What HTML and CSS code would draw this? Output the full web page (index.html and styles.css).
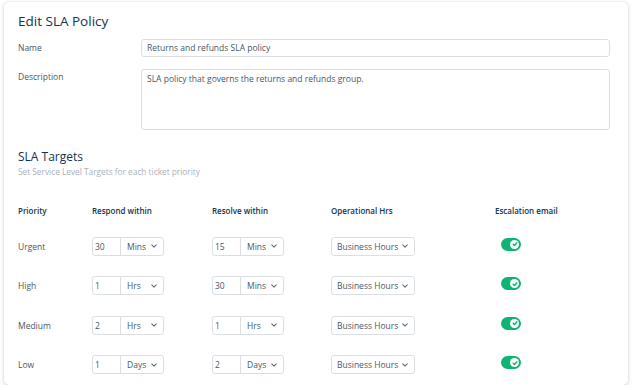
FILE: index.html
```html
<!DOCTYPE html>
<html>
<head>
<meta charset="utf-8">
<link rel="stylesheet" href="styles.css">
</head>
<body>
<div class="card">
  <h1 class="title">Edit SLA Policy</h1>
  <div class="form">
    <div class="form-row">
      <label class="form-label label-name">Name</label>
      <div class="input">Returns and refunds SLA policy</div>
    </div>
    <div class="form-row">
      <label class="form-label">Description</label>
      <div class="input textarea">SLA policy that governs the returns and refunds group.</div>
    </div>
  </div>
  <h2 class="section-title">SLA Targets</h2>
  <p class="section-sub">Set Service Level Targets for each ticket priority</p>
  <div class="table">
    <div class="th">Priority</div>
    <div class="th">Respond within</div>
    <div class="th">Resolve within</div>
    <div class="th">Operational Hrs</div>
    <div class="th">Escalation email</div>

    <div class="td pr">Urgent</div>
    <div class="td"><div class="combo"><span class="num">30</span><span class="unit">Mins<svg class="chev" viewBox="0 0 8 5"><path d="M1 1l3 3 3-3"/></svg></span></div></div>
    <div class="td"><div class="combo"><span class="num">15</span><span class="unit">Mins<svg class="chev" viewBox="0 0 8 5"><path d="M1 1l3 3 3-3"/></svg></span></div></div>
    <div class="td"><div class="select"><span class="sel-text">Business Hours</span><svg class="chev" viewBox="0 0 8 5"><path d="M1 1l3 3 3-3"/></svg></div></div>
    <div class="td tg"><span class="toggle"><span class="knob"><svg viewBox="0 0 8 8"><path d="M2.2 4.2l1.3 1.3 2.4-2.7"/></svg></span></span></div>

    <div class="td pr">High</div>
    <div class="td"><div class="combo"><span class="num">1</span><span class="unit">Hrs<svg class="chev" viewBox="0 0 8 5"><path d="M1 1l3 3 3-3"/></svg></span></div></div>
    <div class="td"><div class="combo"><span class="num">30</span><span class="unit">Mins<svg class="chev" viewBox="0 0 8 5"><path d="M1 1l3 3 3-3"/></svg></span></div></div>
    <div class="td"><div class="select"><span class="sel-text">Business Hours</span><svg class="chev" viewBox="0 0 8 5"><path d="M1 1l3 3 3-3"/></svg></div></div>
    <div class="td tg"><span class="toggle"><span class="knob"><svg viewBox="0 0 8 8"><path d="M2.2 4.2l1.3 1.3 2.4-2.7"/></svg></span></span></div>

    <div class="td pr">Medium</div>
    <div class="td"><div class="combo"><span class="num">2</span><span class="unit">Hrs<svg class="chev" viewBox="0 0 8 5"><path d="M1 1l3 3 3-3"/></svg></span></div></div>
    <div class="td"><div class="combo"><span class="num">1</span><span class="unit">Hrs<svg class="chev" viewBox="0 0 8 5"><path d="M1 1l3 3 3-3"/></svg></span></div></div>
    <div class="td"><div class="select"><span class="sel-text">Business Hours</span><svg class="chev" viewBox="0 0 8 5"><path d="M1 1l3 3 3-3"/></svg></div></div>
    <div class="td tg"><span class="toggle"><span class="knob"><svg viewBox="0 0 8 8"><path d="M2.2 4.2l1.3 1.3 2.4-2.7"/></svg></span></span></div>

    <div class="td pr">Low</div>
    <div class="td"><div class="combo"><span class="num">1</span><span class="unit">Days<svg class="chev" viewBox="0 0 8 5"><path d="M1 1l3 3 3-3"/></svg></span></div></div>
    <div class="td"><div class="combo"><span class="num">2</span><span class="unit">Days<svg class="chev" viewBox="0 0 8 5"><path d="M1 1l3 3 3-3"/></svg></span></div></div>
    <div class="td"><div class="select"><span class="sel-text">Business Hours</span><svg class="chev" viewBox="0 0 8 5"><path d="M1 1l3 3 3-3"/></svg></div></div>
    <div class="td tg"><span class="toggle"><span class="knob"><svg viewBox="0 0 8 8"><path d="M2.2 4.2l1.3 1.3 2.4-2.7"/></svg></span></span></div>
  </div>
</div>
</body>
</html>
```

FILE: styles.css
```css
* { box-sizing: border-box; }
html, body { margin: 0; padding: 0; background: #ffffff; }
body {
  font-family: "Open Sans", "Liberation Sans", sans-serif;
  color: #475867;
  padding: 2px 5px 0 4px;
}
.card {
  width: 624px;
  height: 383px;
  background: #fff;
  border-radius: 5px;
  box-shadow: 0 1px 4px rgba(0,0,0,0.18), 0 0 1px rgba(0,0,0,0.12);
  padding: 10px 18px 0 14px;
}
.title {
  margin: 0;
  font-size: 13.5px;
  line-height: 18px;
  font-weight: 400;
  color: #12344d;
}
.form { margin-top: 9px; display: flex; flex-direction: column; gap: 12px; }
.form-row { display: flex; }
.form-label {
  width: 123px;
  font-size: 8.5px;
  line-height: 12px;
  padding-top: 2px;
  color: #475867;
}
.label-name { padding-top: 3px; }
.input {
  flex: 1;
  height: 18px;
  border: 1px solid #dbdfe4;
  border-radius: 3px;
  font-size: 8.5px;
  line-height: 16px;
  padding: 0 5px;
  color: #475867;
}
.textarea { height: 61px; padding-top: 1px; }
.section-title {
  margin: 19px 0 0 0;
  font-size: 12px;
  line-height: 16px;
  font-weight: 400;
  color: #12344d;
}
.section-sub {
  margin: 1px 0 0 0;
  font-size: 8.3px;
  line-height: 11px;
  color: #a8b1ba;
}
.table {
  margin-top: 27px;
  display: grid;
  grid-template-columns: 74px 120px 119px 164px 1fr;
  grid-template-rows: 12px repeat(4, 19px);
  row-gap: 20.5px;
  align-items: center;
}
.th {
  font-size: 8px;
  line-height: 12px;
  font-weight: 600;
  color: #12344d;
  white-space: nowrap;
  margin-bottom: -1.5px;
}
.td { font-size: 8.5px; color: #475867; display: flex; align-items: center; white-space: nowrap; }
.combo {
  display: flex;
  width: 72px;
  height: 19px;
  border: 1px solid #dbdfe4;
  border-radius: 3px;
  font-size: 8.5px;
  line-height: 17px;
}
.num { width: 28px; border-right: 1px solid #dbdfe4; padding-left: 2px; }
.unit { flex: 1; padding-left: 6px; display: flex; align-items: center; }
.chev {
  flex-shrink: 0;
  width: 6px; height: 4px; margin-left: auto; margin-right: 6px;
  fill: none; stroke: #5d6d7d; stroke-width: 1.4; stroke-linecap: round; stroke-linejoin: round;
}
.select {
  display: flex;
  align-items: center;
  width: 84px;
  height: 19px;
  border: 1px solid #dbdfe4;
  border-radius: 3px;
  padding-left: 5px;
  font-size: 8.5px;
  white-space: nowrap;
}
.sel-text { flex-shrink: 0; }
.select .chev { margin-left: auto; margin-right: 6px; }
.tg { padding-left: 6px; }
.toggle {
  display: flex;
  align-items: center;
  justify-content: flex-end;
  width: 20px;
  height: 13px;
  border-radius: 7px;
  background: #10b472;
  padding-right: 2px;
  margin-top: -4px;
}
.knob {
  width: 9px; height: 9px; border-radius: 50%; background: #fff;
  display: flex; align-items: center; justify-content: center;
}
.knob svg { width: 8px; height: 8px; fill: none; stroke: #10b472; stroke-width: 1.4; stroke-linecap: round; stroke-linejoin: round; }
```
